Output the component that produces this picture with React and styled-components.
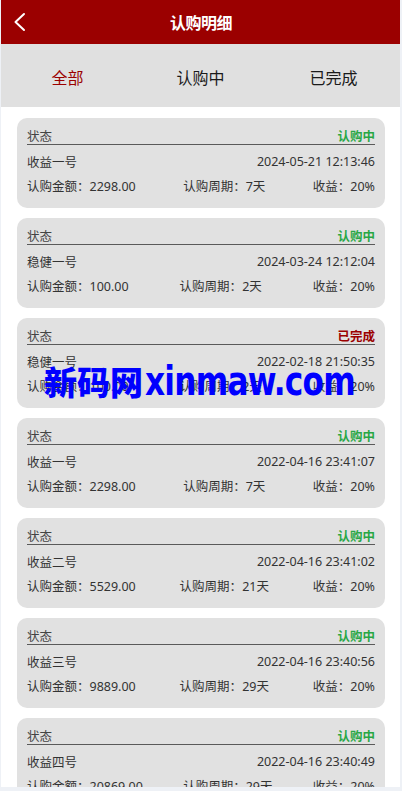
import React from "react";
import styled, { createGlobalStyle } from "styled-components";

const GlobalStyle = createGlobalStyle`
  html, body { margin: 0; padding: 0; background: #eef1f6; }
  body { font-family: "Noto Sans CJK SC", "Noto Sans", sans-serif; }
  * { box-sizing: border-box; }
`;

const Page = styled.div`
  position: relative;
  width: 399px;
  height: 787px;
  margin-left: 1px;
  background: #ffffff;
  overflow: hidden;
`;

const Header = styled.header`
  display: grid;
  grid-template-columns: 44px 1fr 44px;
  align-items: center;
  height: 44px;
  margin: 0 -2px 0 -1px;
  background: #9b0000;
`;

const BackButton = styled.button`
  display: flex;
  align-items: center;
  justify-content: flex-start;
  height: 44px;
  padding: 0 0 0 13px;
  border: 0;
  background: transparent;
  cursor: pointer;
`;

const Title = styled.h1`
  margin: 0;
  text-align: center;
  color: #ffffff;
  font-size: 16px;
  font-weight: 700;
  letter-spacing: -0.5px;
`;

const Tabs = styled.nav`
  display: grid;
  grid-template-columns: repeat(3, 1fr);
  align-items: center;
  height: 63px;
  padding-top: 3px;
  background: #e0e0e0;
`;

const Tab = styled.div`
  text-align: center;
  font-size: 16px;
  color: ${(p) => (p.$active ? "#9b0000" : "#1a1a1a")};
`;

const List = styled.div`
  padding: 11px 15px 0 16px;
`;

const Card = styled.div`
  height: 90px;
  margin-bottom: 10px;
  padding: 10px 10px;
  border-radius: 10px;
  background: #e1e1e1;
`;

const StatusRow = styled.div`
  display: flex;
  justify-content: space-between;
  align-items: center;
  height: 17px;
  line-height: 16px;
  font-size: 12.5px;
  color: #444;
  border-bottom: 1px solid #5a5a5a;
`;

const StatusValue = styled.span`
  font-weight: 700;
  color: ${(p) => (p.$done ? "#9b0000" : "#28a745")};
`;

const Row = styled.div`
  display: flex;
  justify-content: space-between;
  align-items: center;
  height: 24px;
  margin-top: ${(p) => (p.$first ? "4px" : "0")};
  font-family: "Noto Sans", "Noto Sans CJK SC", sans-serif;
  font-size: 12.5px;
  color: #333;
`;

const Watermark = styled.div`
  position: absolute;
  top: 357px;
  left: 43px;
  display: flex;
  align-items: baseline;
  color: #0000ff;
  font-weight: 900;
  pointer-events: none;
  white-space: nowrap;
`;

const WatermarkCjk = styled.span`
  font-family: "Noto Sans CJK SC", sans-serif;
  font-size: 33px;
`;

const WatermarkLatin = styled.span`
  display: inline-block;
  margin-left: 2px;
  font-family: "DejaVu Sans", sans-serif;
  font-size: 40px;
  font-weight: 700;
  letter-spacing: -1px;
  transform: scaleX(0.78);
  transform-origin: left center;
`;

const records = [
  { status: "认购中", name: "收益一号", time: "2024-05-21 12:13:46", amount: "2298.00", period: "7天", rate: "20%" },
  { status: "认购中", name: "稳健一号", time: "2024-03-24 12:12:04", amount: "100.00", period: "2天", rate: "20%" },
  { status: "已完成", name: "稳健一号", time: "2022-02-18 21:50:35", amount: "100.00", period: "2天", rate: "20%" },
  { status: "认购中", name: "收益一号", time: "2022-04-16 23:41:07", amount: "2298.00", period: "7天", rate: "20%" },
  { status: "认购中", name: "收益二号", time: "2022-04-16 23:41:02", amount: "5529.00", period: "21天", rate: "20%" },
  { status: "认购中", name: "收益三号", time: "2022-04-16 23:40:56", amount: "9889.00", period: "29天", rate: "20%" },
  { status: "认购中", name: "收益四号", time: "2022-04-16 23:40:49", amount: "20869.00", period: "29天", rate: "20%" },
];

function BackIcon() {
  return (
    <svg width="14" height="20" viewBox="0 0 14 20" fill="none">
      <path d="M11 2 L2.5 10 L11 18" stroke="#ffffff" strokeWidth="2" strokeLinecap="round" strokeLinejoin="round" />
    </svg>
  );
}

export default function App() {
  return (
    <>
      <GlobalStyle />
      <Page>
        <Header>
          <BackButton aria-label="返回">
            <BackIcon />
          </BackButton>
          <Title>认购明细</Title>
          <span />
        </Header>
        <Tabs>
          <Tab $active>全部</Tab>
          <Tab>认购中</Tab>
          <Tab>已完成</Tab>
        </Tabs>
        <List>
          {records.map((r, i) => (
            <Card key={i}>
              <StatusRow>
                <span>状态</span>
                <StatusValue $done={r.status === "已完成"}>{r.status}</StatusValue>
              </StatusRow>
              <Row $first>
                <span>{r.name}</span>
                <span>{r.time}</span>
              </Row>
              <Row>
                <span>认购金额：{r.amount}</span>
                <span>认购周期：{r.period}</span>
                <span>收益：{r.rate}</span>
              </Row>
            </Card>
          ))}
        </List>
        <Watermark>
          <WatermarkCjk>新码网</WatermarkCjk>
          <WatermarkLatin>xinmaw.com</WatermarkLatin>
        </Watermark>
      </Page>
    </>
  );
}
